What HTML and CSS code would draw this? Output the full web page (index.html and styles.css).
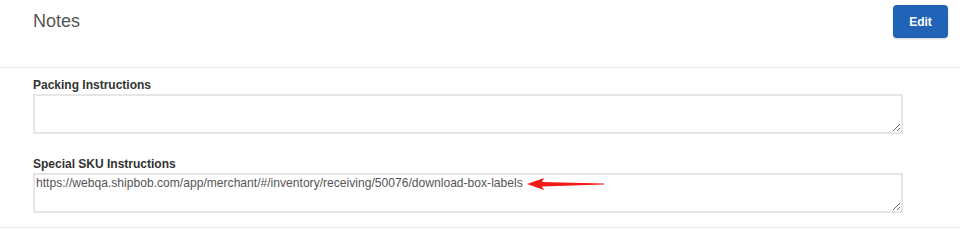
FILE: index.html
```html
<!DOCTYPE html>
<html lang="en">
<head>
  <meta charset="UTF-8">
  <title>Notes</title>
  <link rel="stylesheet" href="styles.css">
</head>
<body>

  <div class="panel">
    <div class="panel-head">
      <h2>Notes</h2>
      <button class="btn-edit">Edit</button>
    </div>

    <div class="panel-body">
      <div class="field">
        <label>Packing Instructions</label>
        <textarea readonly></textarea>
      </div>
      <div class="field last">
        <label>Special SKU Instructions</label>
        <textarea readonly>https://webqa.shipbob.com/app/merchant/#/inventory/receiving/50076/download-box-labels</textarea>
        <svg class="arrow" width="80" height="14" viewBox="0 0 80 14">
          <polygon points="0,7 17,1 15,5 77,6.4 77,7.6 15,9.5 17,13" fill="#f21b1b"/>
        </svg>
      </div>
    </div>
  </div>

</body>
</html>
```

FILE: styles.css
```css
body {
  margin: 0;
  padding: 0;
  font-family: "Liberation Sans", Arial, sans-serif;
  background: #fff;
  color: #333;
}

.panel {
  width: 960px;
}

.panel-head {
  display: flex;
  justify-content: space-between;
  align-items: flex-start;
  height: 67px;
  padding: 0 12px 0 33px;
  border-bottom: 1px solid #e8e8e8;
}

.panel-head h2 {
  margin: 11px 0 0;
  font-size: 18px;
  font-weight: normal;
  color: #555;
}

.btn-edit {
  margin-top: 5px;
  width: 55px;
  height: 33px;
  background: #2163b6;
  color: #fff;
  border: none;
  border-radius: 4px;
  font-family: "Liberation Sans", Arial, sans-serif;
  font-size: 12px;
  font-weight: bold;
  box-shadow: 0 1px 2px rgba(0,0,0,0.2);
}

.panel-body {
  padding: 10px 57px 14px 33px;
  border-bottom: 1px solid #e8e8e8;
}

.field {
  position: relative;
  margin-bottom: 23px;
}

.field.last {
  margin-bottom: 0;
}

.field label {
  display: block;
  font-size: 12px;
  line-height: 14px;
  font-weight: bold;
  color: #333;
  margin-bottom: 2px;
}

.field textarea {
  display: block;
  box-sizing: border-box;
  width: 870px;
  height: 40px;
  margin: 0;
  padding: 1px 1px;
  border: 2px solid #e6e6e6;
  font-family: "Liberation Sans", Arial, sans-serif;
  font-size: 12.1px;
  color: #555;
  outline: none;
}

.arrow {
  position: absolute;
  left: 494px;
  top: 20px;
}
```
